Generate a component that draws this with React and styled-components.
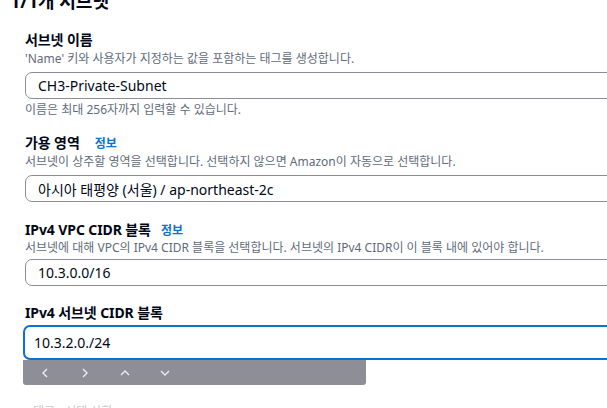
import React from 'react';
import styled, { createGlobalStyle } from 'styled-components';

const GlobalStyle = createGlobalStyle`
  html, body {
    margin: 0;
    padding: 0;
    background: #ffffff;
    overflow: hidden;
  }
  body {
    font-family: "Noto Sans", "Noto Sans CJK KR", sans-serif;
    color: #000716;
  }
`;

const Page = styled.div`
  width: 607px;
  height: 408px;
  overflow: hidden;
  padding-left: 10px;
  box-sizing: border-box;
`;

const Heading = styled.h2`
  margin: -10px 0 0 0;
  font-size: 18px;
  line-height: 22px;
  font-weight: 700;
`;

const Fields = styled.div`
  padding-left: 15px;
  display: flex;
  flex-direction: column;
`;

const Field = styled.div`
  display: flex;
  flex-direction: column;
  margin-top: ${({ top }) => top}px;
`;

const LabelRow = styled.div`
  display: flex;
  align-items: baseline;
  gap: ${({ gap }) => gap || 12}px;
`;

const Label = styled.label`
  font-size: 14px;
  line-height: 18px;
  font-weight: 700;
  letter-spacing: -0.1px;
`;

const InfoLink = styled.a`
  font-size: 12px;
  font-weight: 700;
  color: #0972d3;
  text-decoration: none;
`;

const Description = styled.div`
  font-size: 12px;
  line-height: 16px;
  color: #5f6b7a;
  margin-top: ${({ top }) => top || 0}px;
  white-space: nowrap;
`;

const Input = styled.div`
  box-sizing: border-box;
  width: 680px;
  height: ${({ focused }) => (focused ? 35 : 27)}px;
  margin-top: ${({ top }) => top || 0}px;
  margin-left: ${({ focused }) => (focused ? -2 : 0)}px;
  border: ${({ focused }) => (focused ? '2px solid #0972d3' : '1px solid #8c8c94')};
  border-radius: 7px;
  padding-left: ${({ focused }) => (focused ? 9 : 12)}px;
  display: flex;
  align-items: center;
  font-size: 14px;
  color: #000716;
  white-space: nowrap;
`;

const Toolbar = styled.div`
  width: 343px;
  height: 25px;
  margin-left: -2px;
  background: #8d8e96;
  border-radius: 0 0 3px 3px;
  display: flex;
  align-items: center;
  padding-left: 2px;
  box-sizing: border-box;
`;

const ToolButton = styled.span`
  width: 40px;
  display: flex;
  align-items: center;
  justify-content: center;
`;

const Faded = styled.div`
  margin-top: 17px;
  margin-left: 8px;
  font-size: 12px;
  color: #c6c6cd;
  white-space: nowrap;
`;

const Chevron = ({ dir }) => {
  const pts = {
    left: '5,1 1,5 5,9',
    right: '1,1 5,5 1,9',
    up: '1,5 5,1 9,5',
    down: '1,1 5,5 9,1',
  }[dir];
  const horiz = dir === 'left' || dir === 'right';
  return (
    <svg width={horiz ? 6 : 10} height={horiz ? 10 : 6} viewBox={horiz ? '0 0 6 10' : '0 0 10 6'}>
      <polyline points={pts} fill="none" stroke="#eceef2" strokeWidth="1.4" />
    </svg>
  );
};

export default function App() {
  return (
    <>
      <GlobalStyle />
      <Page>
        <Heading>1/1개 서브넷</Heading>
        <Fields>
          <Field top={19}>
            <Label>서브넷 이름</Label>
            <Description top={2}>'Name' 키와 사용자가 지정하는 값을 포함하는 태그를 생성합니다.</Description>
            <Input top={5}>CH3-Private-Subnet</Input>
            <Description top={3}>이름은 최대 256자까지 입력할 수 있습니다.</Description>
          </Field>
          <Field top={16}>
            <LabelRow gap={15}>
              <Label>가용 영역</Label>
              <InfoLink>정보</InfoLink>
            </LabelRow>
            <Description top={2}>서브넷이 상주할 영역을 선택합니다. 선택하지 않으면 Amazon이 자동으로 선택합니다.</Description>
            <Input top={5}>아시아 태평양 (서울) / ap-northeast-2c</Input>
          </Field>
          <Field top={19}>
            <LabelRow gap={10}>
              <Label>IPv4 VPC CIDR 블록</Label>
              <InfoLink>정보</InfoLink>
            </LabelRow>
            <Description top={1}>서브넷에 대해 VPC의 IPv4 CIDR 블록을 선택합니다. 서브넷의 IPv4 CIDR이 이 블록 내에 있어야 합니다.</Description>
            <Input top={3}>10.3.0.0/16</Input>
          </Field>
          <Field top={18}>
            <Label>IPv4 서브넷 CIDR 블록</Label>
            <Input focused top={3}>10.3.2.0./24</Input>
            <Toolbar>
              <ToolButton><Chevron dir="left" /></ToolButton>
              <ToolButton><Chevron dir="right" /></ToolButton>
              <ToolButton><Chevron dir="up" /></ToolButton>
              <ToolButton><Chevron dir="down" /></ToolButton>
            </Toolbar>
            <Faded>태그 - 선택 사항</Faded>
          </Field>
        </Fields>
      </Page>
    </>
  );
}
